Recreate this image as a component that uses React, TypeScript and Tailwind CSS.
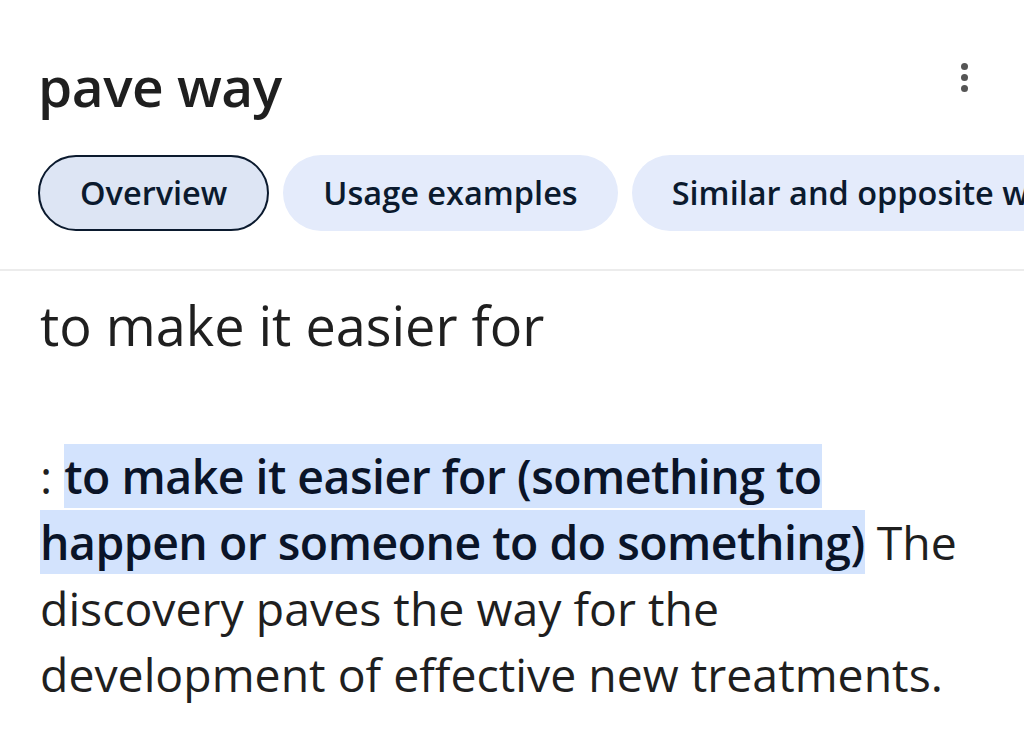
export default function App() {
  return (
    <div
      className="h-[740px] w-[1024px] overflow-hidden bg-white text-[#1f1f1f]"
      style={{ fontFamily: '"Open Sans", Roboto, sans-serif' }}
    >
      {/* header */}
      <div className="flex h-[130px] items-start justify-between pl-[38px] pr-[56px] pt-[50px]">
        <h1 className="text-[55px] leading-[72px] font-semibold tracking-[-0.5px] text-[#1f1f1f]">pave way</h1>
        <div className="mt-[13px] flex flex-col items-center gap-[4px]">
          <span className="h-[7px] w-[7px] rounded-full bg-[#555]" />
          <span className="h-[7px] w-[7px] rounded-full bg-[#555]" />
          <span className="h-[7px] w-[7px] rounded-full bg-[#555]" />
        </div>
      </div>

      {/* tabs */}
      <div className="flex gap-[14px] overflow-hidden whitespace-nowrap pl-[38px] pt-[25px]">
        <div className="flex h-[76px] shrink-0 items-center rounded-full border-2 border-[#0b1a2e] bg-[#dde5f4] px-[40px] text-[32.5px] font-semibold text-[#0b1a2e]">
          Overview
        </div>
        <div className="flex h-[76px] shrink-0 items-center rounded-full bg-[#e4ebfb] px-[40px] text-[32.5px] font-semibold text-[#0b1a2e]">
          Usage examples
        </div>
        <div className="flex h-[76px] shrink-0 items-center rounded-full bg-[#e4ebfb] px-[40px] text-[32.5px] font-semibold text-[#0b1a2e]">
          Similar and opposite words
        </div>
      </div>

      <div className="mt-[38px] h-[2px] bg-[#ececec]" />

      {/* definition */}
      <div className="px-[40px] pt-[18px]">
        <p className="text-[54px] leading-[72px] text-[#1f1f1f]">to make it easier for</p>
        <p className="mt-[82px] text-[46.4px] leading-[66px] text-[#1f1f1f]">
          :{" "}
          <span className="bg-[#d3e3fd] font-semibold tracking-[-0.5px] text-[#0a1428]">
            to make it easier for (something to happen or someone to do something)
          </span>{" "}
          The discovery paves the way for the development of effective new treatments.
        </p>
      </div>
    </div>
  );
}
